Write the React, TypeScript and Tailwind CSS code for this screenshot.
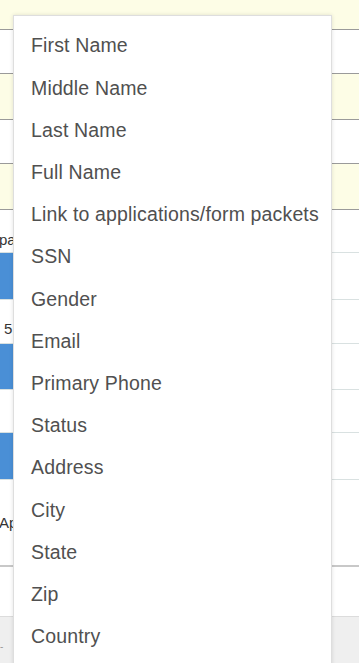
const columns = [
  "First Name",
  "Middle Name",
  "Last Name",
  "Full Name",
  "Link to applications/form packets",
  "SSN",
  "Gender",
  "Email",
  "Primary Phone",
  "Status",
  "Address",
  "City",
  "State",
  "Zip",
  "Country",
];

function BackgroundTable() {
  return (
    <div className="flex flex-col w-full font-['Liberation_Sans',Arial,sans-serif] text-[15px] text-[#333]">
      <div className="h-[30px] bg-[#fdfde6] border-b border-[#9a9a9a]" />
      <div className="h-[44px] bg-white border-b border-[#9a9a9a]" />
      <div className="h-[46px] bg-[#fdfde6] border-b border-[#9a9a9a]" />
      <div className="h-[44px] bg-white border-b border-[#9a9a9a]" />
      <div className="h-[46px] bg-[#fdfde6] border-b border-[#9a9a9a]" />
      <div className="h-[43px] bg-white border-b border-[#d9e1e1] flex items-end pb-[5px] leading-none -ml-[1px]">
        <span>pa</span>
      </div>
      <div className="h-[47px] bg-white border-b border-[#d9e1e1]">
        <div className="w-[40px] h-full bg-[#4a8fd6]" />
      </div>
      <div className="h-[44px] bg-white border-b border-[#d9e1e1] flex items-start pt-[21px] pl-[4px] leading-none">
        <span>5</span>
      </div>
      <div className="h-[46px] bg-white border-b border-[#d9e1e1]">
        <div className="w-[40px] h-full bg-[#4a8fd6]" />
      </div>
      <div className="h-[43px] bg-white border-b border-[#d9e1e1]" />
      <div className="h-[47px] bg-white border-b border-[#d9e1e1]">
        <div className="w-[40px] h-full bg-[#4a8fd6]" />
      </div>
      <div className="h-[87px] bg-white border-b-2 border-[#c8c8c8] flex items-center leading-none -ml-[1px]">
        <span>Ap</span>
      </div>
      <div className="h-[50px] bg-white border-b border-[#dcdcdc]" />
      <div className="h-[60px] bg-[#efefef] flex items-center text-[#999] leading-none">
        <span className="text-[10px]">-</span>
      </div>
    </div>
  );
}

function ColumnMenu() {
  return (
    <div className="absolute left-[13px] top-[15px] w-[319px] bg-white border border-[#dedede] shadow-[0_0_4px_rgba(0,0,0,0.12)] pt-[9px] pb-[8px]">
      {columns.map((c) => (
        <div
          key={c}
          className="h-[42.2px] flex items-center pl-[17px] text-[19.5px] tracking-[0.15px] text-[#505050] whitespace-nowrap font-['Liberation_Sans',Arial,sans-serif]"
        >
          {c}
        </div>
      ))}
    </div>
  );
}

export default function App() {
  return (
    <div className="relative w-[359px] h-[663px] overflow-hidden bg-white">
      <BackgroundTable />
      <ColumnMenu />
    </div>
  );
}
